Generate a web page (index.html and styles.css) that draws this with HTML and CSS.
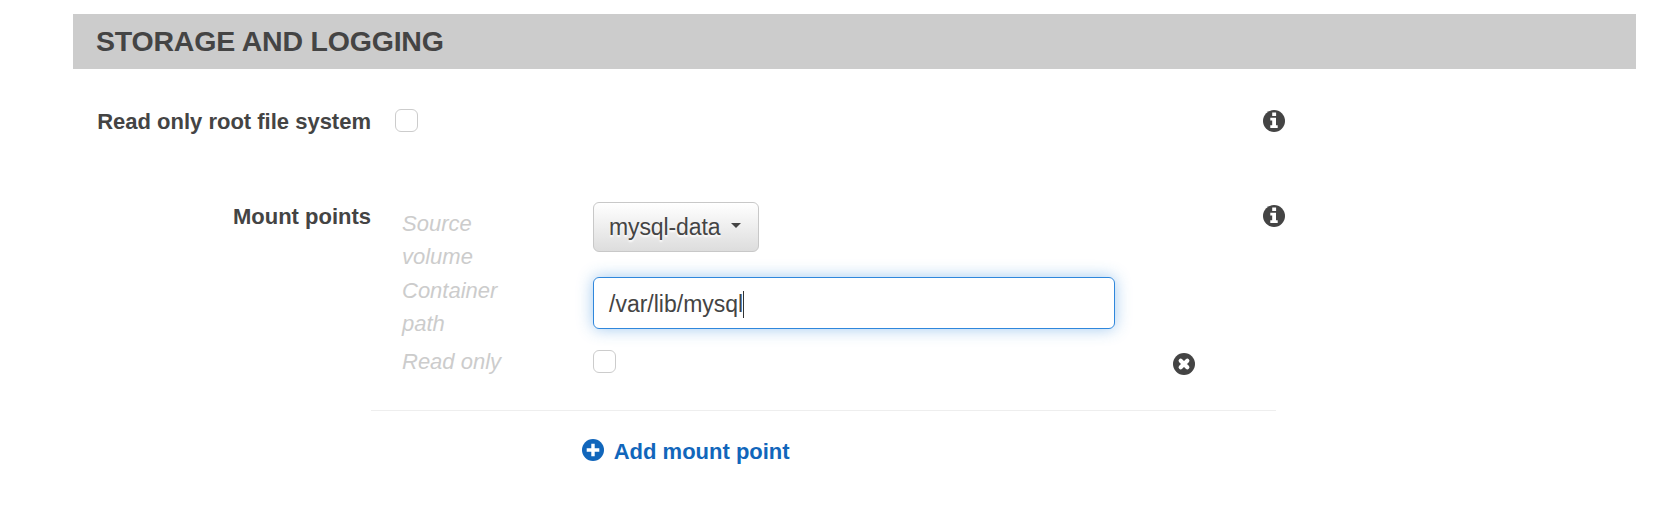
FILE: index.html
```html
<!DOCTYPE html>
<html lang="en">
<head>
<meta charset="utf-8">
<title>Storage and logging</title>
<link rel="stylesheet" href="styles.css">
</head>
<body>
<svg class="defs" aria-hidden="true">
  <symbol id="info" viewBox="0 0 22 22"><circle cx="11" cy="11" r="11" fill="currentColor"/><path fill="#fff" d="M9.2 2.6h3.9v3.5H9.2zM7.3 7.7H13v7.5h1.7v2.8H7.3v-2.8h1.9v-4.7H7.3z"/></symbol>
  <symbol id="remove" viewBox="0 0 22 22"><circle cx="11" cy="11" r="11" fill="currentColor"/><path stroke="#fff" stroke-width="4.2" stroke-linecap="round" d="M7.7 7.7l6.6 6.6M14.3 7.7l-6.6 6.6"/></symbol>
  <symbol id="plus" viewBox="0 0 22 22"><circle cx="11" cy="11" r="11" fill="currentColor"/><path stroke="#fff" stroke-width="3.4" d="M11 4.7v12.6M4.7 11h12.6"/></symbol>
</svg>
<main class="section">
  <h2 class="title">STORAGE AND LOGGING</h2>
  <div class="row row-readonly">
    <label class="label">Read only root file system</label>
    <div class="field"><span class="checkbox"></span></div>
    <svg class="icon"><use href="#info"/></svg>
  </div>
  <div class="row">
    <div class="label">Mount points</div>
    <div class="mounts">
      <div class="mount">
        <div class="names">
          <div class="name">Source<br>volume</div>
          <div class="name">Container<br>path</div>
          <div class="name name-last">Read only</div>
        </div>
        <div class="controls">
          <button class="select">mysql-data<span class="arrow"></span></button>
          <div class="input">/var/lib/mysql<span class="caret"></span></div>
          <span class="checkbox"></span>
        </div>
        <svg class="icon icon-remove"><use href="#remove"/></svg>
      </div>
      <a class="add"><svg class="icon icon-add"><use href="#plus"/></svg>Add mount point</a>
    </div>
    <svg class="icon"><use href="#info"/></svg>
  </div>
</main>
</body>
</html>
```
FILE: styles.css
```css
* { box-sizing: border-box; }
body {
  margin: 0;
  background: #fff;
  color: #444;
  font: 22px/32px "Liberation Sans", Arial, sans-serif;
}
.defs { display: none; }
.section { padding: 14px 44px 0 73px; }
.title {
  height: 55px;
  margin: 0 0 36px;
  padding-left: 23px;
  background: #ccc;
  font-size: 28.5px;
  line-height: 54px;
  letter-spacing: -0.2px;
}
.row {
  display: grid;
  grid-template-columns: 298px 892.3px 22px;
  align-items: start;
}
.row-readonly { height: 95px; }
.label { font-weight: bold; line-height: 34px; text-align: right; white-space: nowrap; }
.field { padding: 4px 0 0 24px; }
.checkbox {
  display: block;
  width: 23px;
  height: 23px;
  border: 1px solid #ccc;
  border-radius: 6px;
  background: #fff;
}
.icon { display: block; width: 22px; height: 22px; margin-top: 5px; }
.mounts { width: 905px; }
.mount {
  display: grid;
  grid-template-columns: 222px 580.4px 22px;
  align-items: start;
  height: 211px;
  border-bottom: 1px solid #eee;
}
.names {
  padding: 6.8px 0 0 31px;
  color: #ccc;
  font-style: italic;
  line-height: 33.4px;
}
.name-last { margin-top: 5px; }
.controls { padding-top: 2px; }
.select {
  display: flex;
  align-items: center;
  width: 166px;
  height: 50px;
  padding: 0 0 0 15px;
  border: 1px solid #c8c8c8;
  border-radius: 6px;
  background: linear-gradient(#fff, #ddd);
  color: #444;
  font: inherit;
  font-size: 23px;
  letter-spacing: -0.1px;
  text-shadow: 0 2px 2px #fff;
}
.arrow {
  margin: -4px 0 0 10px;
  border: 5.5px solid transparent;
  border-width: 5px 5px 0;
  border-top-color: #444;
}
.input {
  display: flex;
  align-items: center;
  width: 522px;
  height: 52px;
  margin: 25px 0 21px;
  padding: 2px 0 0 15px;
  border: 1px solid #2f87dc;
  border-radius: 6px;
  box-shadow: 0 0 16px rgba(47, 135, 220, 0.45);
  font-size: 23px;
}
.caret { width: 1px; height: 27px; background: #333; }
.icon-remove { margin-top: 153.4px; }
.icon-add { margin-top: 3px; }
.add {
  display: flex;
  width: max-content;
  margin: 25px 0 0 210.7px;
  gap: 10px;
  color: #1166bb;
  font-weight: bold;
}
```
